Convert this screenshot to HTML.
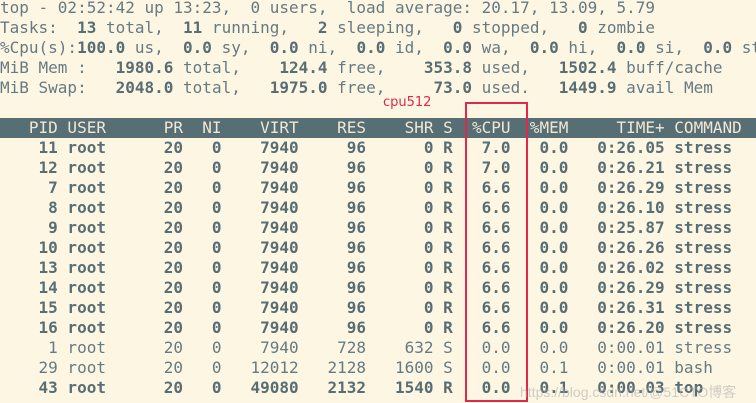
<!DOCTYPE html>
<html><head><meta charset="utf-8"><style>
html,body{margin:0;padding:0;background:#fdf6e3;width:756px;height:403px;overflow:hidden;}
pre{margin:0;font-family:"DejaVu Sans Mono","Liberation Mono",monospace;font-size:16px;line-height:20px;color:#657b83;white-space:pre;position:absolute;left:0;top:-2px;}
b{color:#586e75;font-weight:bold;}
.h{background:#586e75;color:#eee8d5;display:inline-block;width:756px;}
.r{font-weight:bold;color:#586e75;}
#lbl{position:absolute;left:383px;top:95px;color:#e0284a;font-family:"DejaVu Sans","Liberation Sans",sans-serif;font-size:13px;}
#box{position:absolute;left:465px;top:102px;width:59px;height:296px;border:2px solid #e0284a;}
#wm{position:absolute;left:520px;top:382px;color:rgba(170,170,170,0.55);font-family:"Liberation Sans","Noto Sans CJK SC",sans-serif;font-size:14px;white-space:nowrap;}
</style></head><body>
<pre>top - 02:52:42 up 13:23,  0 users,  load average: 20.17, 13.09, 5.79
Tasks:<b>  13</b> total,<b>  11</b> running,<b>   2</b> sleeping,<b>   0</b> stopped,<b>   0</b> zombie
%Cpu(s):<b>100.0</b> us,<b>  0.0</b> sy,<b>  0.0</b> ni,<b>  0.0</b> id,<b>  0.0</b> wa,<b>  0.0</b> hi,<b>  0.0</b> si,<b>  0.0</b> st
MiB Mem :<b>   1980.6</b> total,<b>    124.4</b> free,<b>    353.8</b> used,<b>   1502.4</b> buff/cache
MiB Swap:<b>   2048.0</b> total,<b>   1975.0</b> free,<b>     73.0</b> used.<b>   1449.9</b> avail Mem

<span class="h">   PID USER      PR  NI    VIRT    RES    SHR S  %CPU  %MEM     TIME+ COMMAND</span>
<span class="r">    11 root      20   0    7940     96      0 R   7.0   0.0   0:26.05 stress</span>
<span class="r">    12 root      20   0    7940     96      0 R   7.0   0.0   0:26.21 stress</span>
<span class="r">     7 root      20   0    7940     96      0 R   6.6   0.0   0:26.29 stress</span>
<span class="r">     8 root      20   0    7940     96      0 R   6.6   0.0   0:26.10 stress</span>
<span class="r">     9 root      20   0    7940     96      0 R   6.6   0.0   0:25.87 stress</span>
<span class="r">    10 root      20   0    7940     96      0 R   6.6   0.0   0:26.26 stress</span>
<span class="r">    13 root      20   0    7940     96      0 R   6.6   0.0   0:26.02 stress</span>
<span class="r">    14 root      20   0    7940     96      0 R   6.6   0.0   0:26.29 stress</span>
<span class="r">    15 root      20   0    7940     96      0 R   6.6   0.0   0:26.31 stress</span>
<span class="r">    16 root      20   0    7940     96      0 R   6.6   0.0   0:26.20 stress</span>
     1 root      20   0    7940    728    632 S   0.0   0.0   0:00.01 stress
    29 root      20   0   12012   2128   1600 S   0.0   0.1   0:00.01 bash
<span class="r">    43 root      20   0   49080   2132   1540 R   0.0   0.1   0:00.03 top</span></pre>
<div id="lbl">cpu512</div>
<div id="box"></div>
<div id="wm">https://blog.csdn.net/@51CTO博客</div>
</body></html>
